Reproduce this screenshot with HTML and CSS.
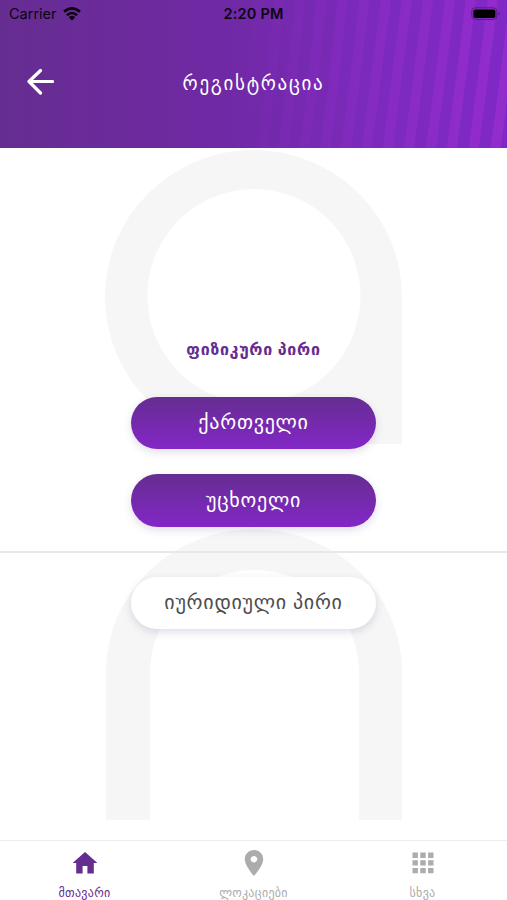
FILE: index.html
```
<!DOCTYPE html>
<html lang="ka">
<head>
<meta charset="UTF-8">
<title>რეგისტრაცია</title>
<link rel="stylesheet" href="styles.css">
</head>
<body>
<div class="screen">
	<header class="header">
		<svg class="stripes" width="507" height="148" viewBox="0 0 507 148">
			<defs>
				<linearGradient id="fade" gradientUnits="userSpaceOnUse" x1="230" y1="0" x2="507" y2="0">
					<stop offset="0" stop-color="#962dcb" stop-opacity="0"/>
					<stop offset="0.45" stop-color="#962dcb" stop-opacity="0.3"/>
					<stop offset="1" stop-color="#982dce" stop-opacity="0.8"/>
				</linearGradient>
			</defs>
			<g fill="none" stroke="url(#fade)" stroke-width="10">
				<path d="M258 -4Q252 70 242 152"/>
				<path d="M279 -4Q273 70 262 152"/>
				<path d="M300 -4Q294 70 283 152"/>
				<path d="M322 -4Q315 70 304 152"/>
				<path d="M343 -4Q336 70 325 152"/>
				<path d="M365 -4Q357 70 346 152"/>
				<path d="M387 -4Q377 70 367 152"/>
				<path d="M408 -4Q398 70 388 152"/>
				<path d="M429 -4Q420 70 409 152"/>
				<path d="M451 -4Q442 70 431 152"/>
				<path d="M472 -4Q463 70 452 152"/>
				<path d="M494 -4Q485 70 474 152"/>
				<path d="M516 -4Q507 70 496 152"/>
			</g>
		</svg>
		<div class="status">
			<div class="carrier">
				<span>Carrier</span>
				<svg width="18" height="14" viewBox="0 0 18 14">
					<g fill="none" stroke="#0b0510" stroke-width="2.6">
						<path d="M1 4.8Q9 -2 17 4.8"/>
						<path d="M3.9 8.2Q9 3.8 14.1 8.2"/>
					</g>
					<path d="M5.8 10.2Q9 7.4 12.2 10.2L9 13.6Z" fill="#0b0510"/>
				</svg>
			</div>
			<div class="time">2:20 PM</div>
			<div class="battery">
				<svg width="30" height="14" viewBox="0 0 30 14">
					<rect x="0.8" y="0.8" width="25" height="11.6" rx="3.4" fill="none" stroke="#5a1c80"/>
					<rect x="2.4" y="2.4" width="22" height="8.6" rx="1.8" fill="#000"/>
					<path d="M27.6 4.8Q29.6 6.6 27.6 8.4Z" fill="#4a1070"/>
				</svg>
			</div>
		</div>
		<div class="titlebar">
			<svg class="back" width="28" height="28" viewBox="0 0 28 28">
				<path d="M26.500 13.500H3M14.500 2.500L3 13.500L14.500 25" fill="none" stroke="#fff" stroke-width="3.200" stroke-linecap="round" stroke-linejoin="round"/>
			</svg>
			<h1>რეგისტრაცია</h1>
		</div>
	</header>

	<main class="content">
		<svg class="watermark" width="507" height="692" viewBox="0 148 507 692">
			<g fill="#f6f6f6">
				<path fill-rule="evenodd" d="M402 444V297A148.500 147 0 1 0 254 444ZM254 189A106.500 107 0 1 1 253.900 189Z"/>
				<path d="M106 820V672A148 143 0 0 1 402 672V820H359V672A104.500 102 0 0 0 150 672V820Z"/>
			</g>
		</svg>
		<section class="group">
			<h2>ფიზიკური პირი</h2>
			<button class="btn primary" type="button">ქართველი</button>
			<button class="btn primary" type="button">უცხოელი</button>
		</section>
		<section class="group legal">
			<button class="btn" type="button">იურიდიული პირი</button>
		</section>
	</main>

	<nav class="tabs">
		<a class="tab active">
			<svg width="26" height="26" viewBox="0 0 26 26">
				<path d="M13 2L0.600 13H4.200V23.600H10.600V16H15.400V23.600H21.800V13H25.400Z" fill="#662d91"/>
			</svg>
			<span>მთავარი</span>
		</a>
		<a class="tab">
			<svg width="26" height="26" viewBox="0 0 26 26">
				<path fill-rule="evenodd" d="M13 0C7.800 0 3.800 4 3.800 9.200C3.800 15.800 13 26 13 26S22.200 15.800 22.200 9.200C22.200 4 18.200 0 13 0ZM13 5.900A3.300 3.300 0 1 1 12.900 5.900Z" fill="#acacac"/>
			</svg>
			<span>ლოკაციები</span>
		</a>
		<a class="tab">
			<svg width="26" height="26" viewBox="0 0 26 26">
				<path d="M2.500 2.500h5.400v5.400h-5.400zM10.300 2.500h5.400v5.400h-5.400zM18.100 2.500h5.400v5.400h-5.400zM2.500 10.200h5.400v5.400h-5.400zM10.300 10.200h5.400v5.400h-5.400zM18.100 10.200h5.400v5.400h-5.400zM2.500 17.900h5.400v5.400h-5.400zM10.300 17.900h5.400v5.400h-5.400zM18.100 17.900h5.400v5.400h-5.400z" fill="#acacac"/>
			</svg>
			<span>სხვა</span>
		</a>
	</nav>
</div>
</body>
</html>
```

FILE: styles.css
```
* {
	box-sizing: border-box;
}
body {
	margin: 0;
	background: #fff;
	font-family: "Noto Sans", "DejaVu Sans", sans-serif;
}
.screen {
	display: flex;
	flex-direction: column;
	height: 900px;
	overflow: hidden;
}
.header {
	position: relative;
	height: 147.5px;
	background: linear-gradient(90deg, #662d91 0%, #7029a5 45%, #7c2abd 75%, #8028c6 100%);
}
.stripes {
	position: absolute;
	top: 0;
	left: 0;
	height: 100%;
}
.status {
	position: relative;
	display: grid;
	grid-template-columns: 1fr auto 1fr;
	height: 27px;
	align-items: center;
	padding: 0 6px 0 9px;
	font-family: Inter, sans-serif;
	font-size: 14.5px;
	color: #0b0510;
}
.carrier {
	display: flex;
	align-items: center;
	gap: 6px;
}
.time {
	margin-right: 3px;
	font-weight: 600;
	letter-spacing: 0.2px;
}
.battery {
	display: flex;
	justify-content: flex-end;
}
.titlebar {
	position: relative;
	display: grid;
	grid-template-columns: 28px 1fr 28px;
	align-items: center;
	height: 110px;
	padding: 0 26px;
}
.titlebar h1 {
	margin: 0;
	padding-top: 2px;
	font-size: 19px;
	font-weight: 400;
	letter-spacing: 1.7px;
	text-align: center;
	color: #fff;
}
.content {
	position: relative;
	flex: 1;
}
.watermark {
	position: absolute;
	top: 0;
	left: 0;
}
.group {
	position: relative;
	display: flex;
	flex-direction: column;
	align-items: center;
	gap: 25px;
	padding: 189px 0 24px;
}
.group h2 {
	margin: 0;
	height: 35px;
	line-height: 24px;
	font-size: 16px;
	font-weight: 600;
	letter-spacing: 0.7px;
	color: #662d91;
}
.legal {
	padding: 24px 0;
	border-top: 2px solid #e8e8e8;
}
.btn {
	width: 245px;
	height: 52.5px;
	padding: 0 0 2px;
	border: 0;
	border-radius: 27px;
	background: #fff;
	font-family: inherit;
	font-size: 20px;
	letter-spacing: 0.75px;
	color: #4d4d4d;
	text-transform: uppercase;
	white-space: nowrap;
	box-shadow: 0 3px 8px rgba(70, 40, 110, 0.16);
}
.primary {
	background: linear-gradient(#662d91, #8327c7);
	color: #fff;
}
.tabs {
	display: grid;
	grid-template-columns: repeat(3, 1fr);
	height: 60px;
	border-top: 1px solid #ececec;
	background: #fff;
}
.tab {
	display: flex;
	flex-direction: column;
	align-items: center;
	padding-top: 9px;
	gap: 9px;
	font-size: 12px;
	line-height: 16px;
	letter-spacing: 0.3px;
	color: #acacac;
}
.active {
	color: #662d91;
}
```
